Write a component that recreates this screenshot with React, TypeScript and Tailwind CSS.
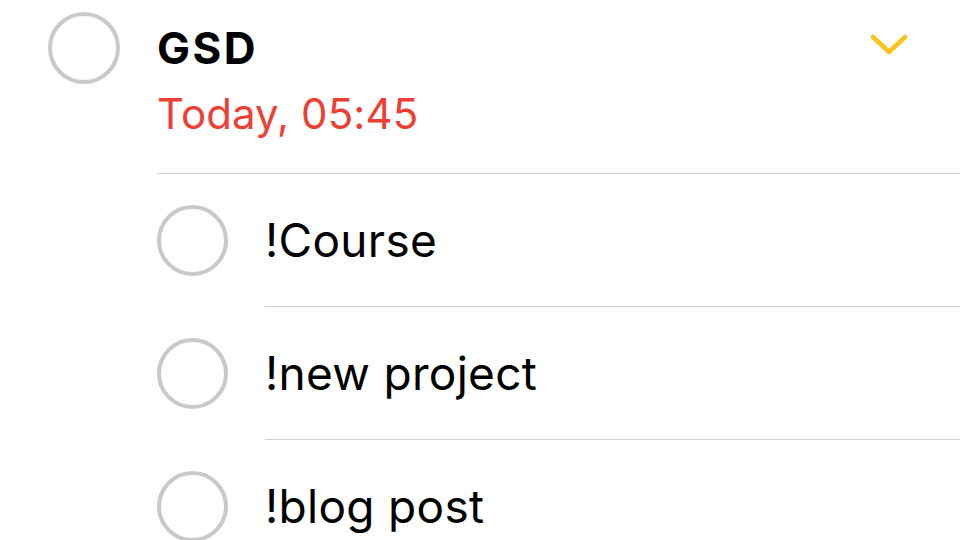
const subtasks = ["!Course", "!new project", "!blog post"];

function Circle({ size }: { size: string }) {
  return <div className={`${size} rounded-full border-[4px] border-[#c9c9c9] shrink-0`} />;
}

export default function App() {
  return (
    <div
      className="w-[960px] h-[540px] overflow-hidden bg-white"
      style={{ fontFamily: "Inter, 'Noto Sans', sans-serif" }}
    >
      {/* parent task */}
      <div className="flex pl-[48px] pt-[12px]">
        <div className="w-[72px] h-[72px] rounded-full border-[4px] border-[#c9c9c9] shrink-0" />
        <div className="flex-1 ml-[37px]">
          <div className="flex items-center h-[72px]">
            <span className="text-[44px] font-bold text-black tracking-[2.5px]">GSD</span>
            <div className="ml-auto mr-[52px] mb-[6px]">
              <svg width="38" height="24" viewBox="0 0 38 24" fill="none">
                <path
                  d="M3 4 L19 19 L35 4"
                  stroke="#fcc419"
                  strokeWidth="4.5"
                  strokeLinecap="round"
                  strokeLinejoin="round"
                />
              </svg>
            </div>
          </div>
          <div className="h-[58px] flex items-center text-[42px] text-[#ee3f35] tracking-[0.1px]">
            Today, 05:45
          </div>
          <div className="mt-[31px] h-px bg-[#d2d2d2]" />
        </div>
      </div>

      {/* subtasks */}
      <div className="pl-[157px]">
        {subtasks.map((t, i) => (
          <div key={i}>
            <div className="flex items-center h-[132px]">
              <Circle size="w-[71px] h-[71px]" />
              <span className="ml-[37px] text-[46px] text-black tracking-[0.3px]">{t}</span>
            </div>
            <div className="ml-[108px] h-px bg-[#d2d2d2]" />
          </div>
        ))}
      </div>
    </div>
  );
}
